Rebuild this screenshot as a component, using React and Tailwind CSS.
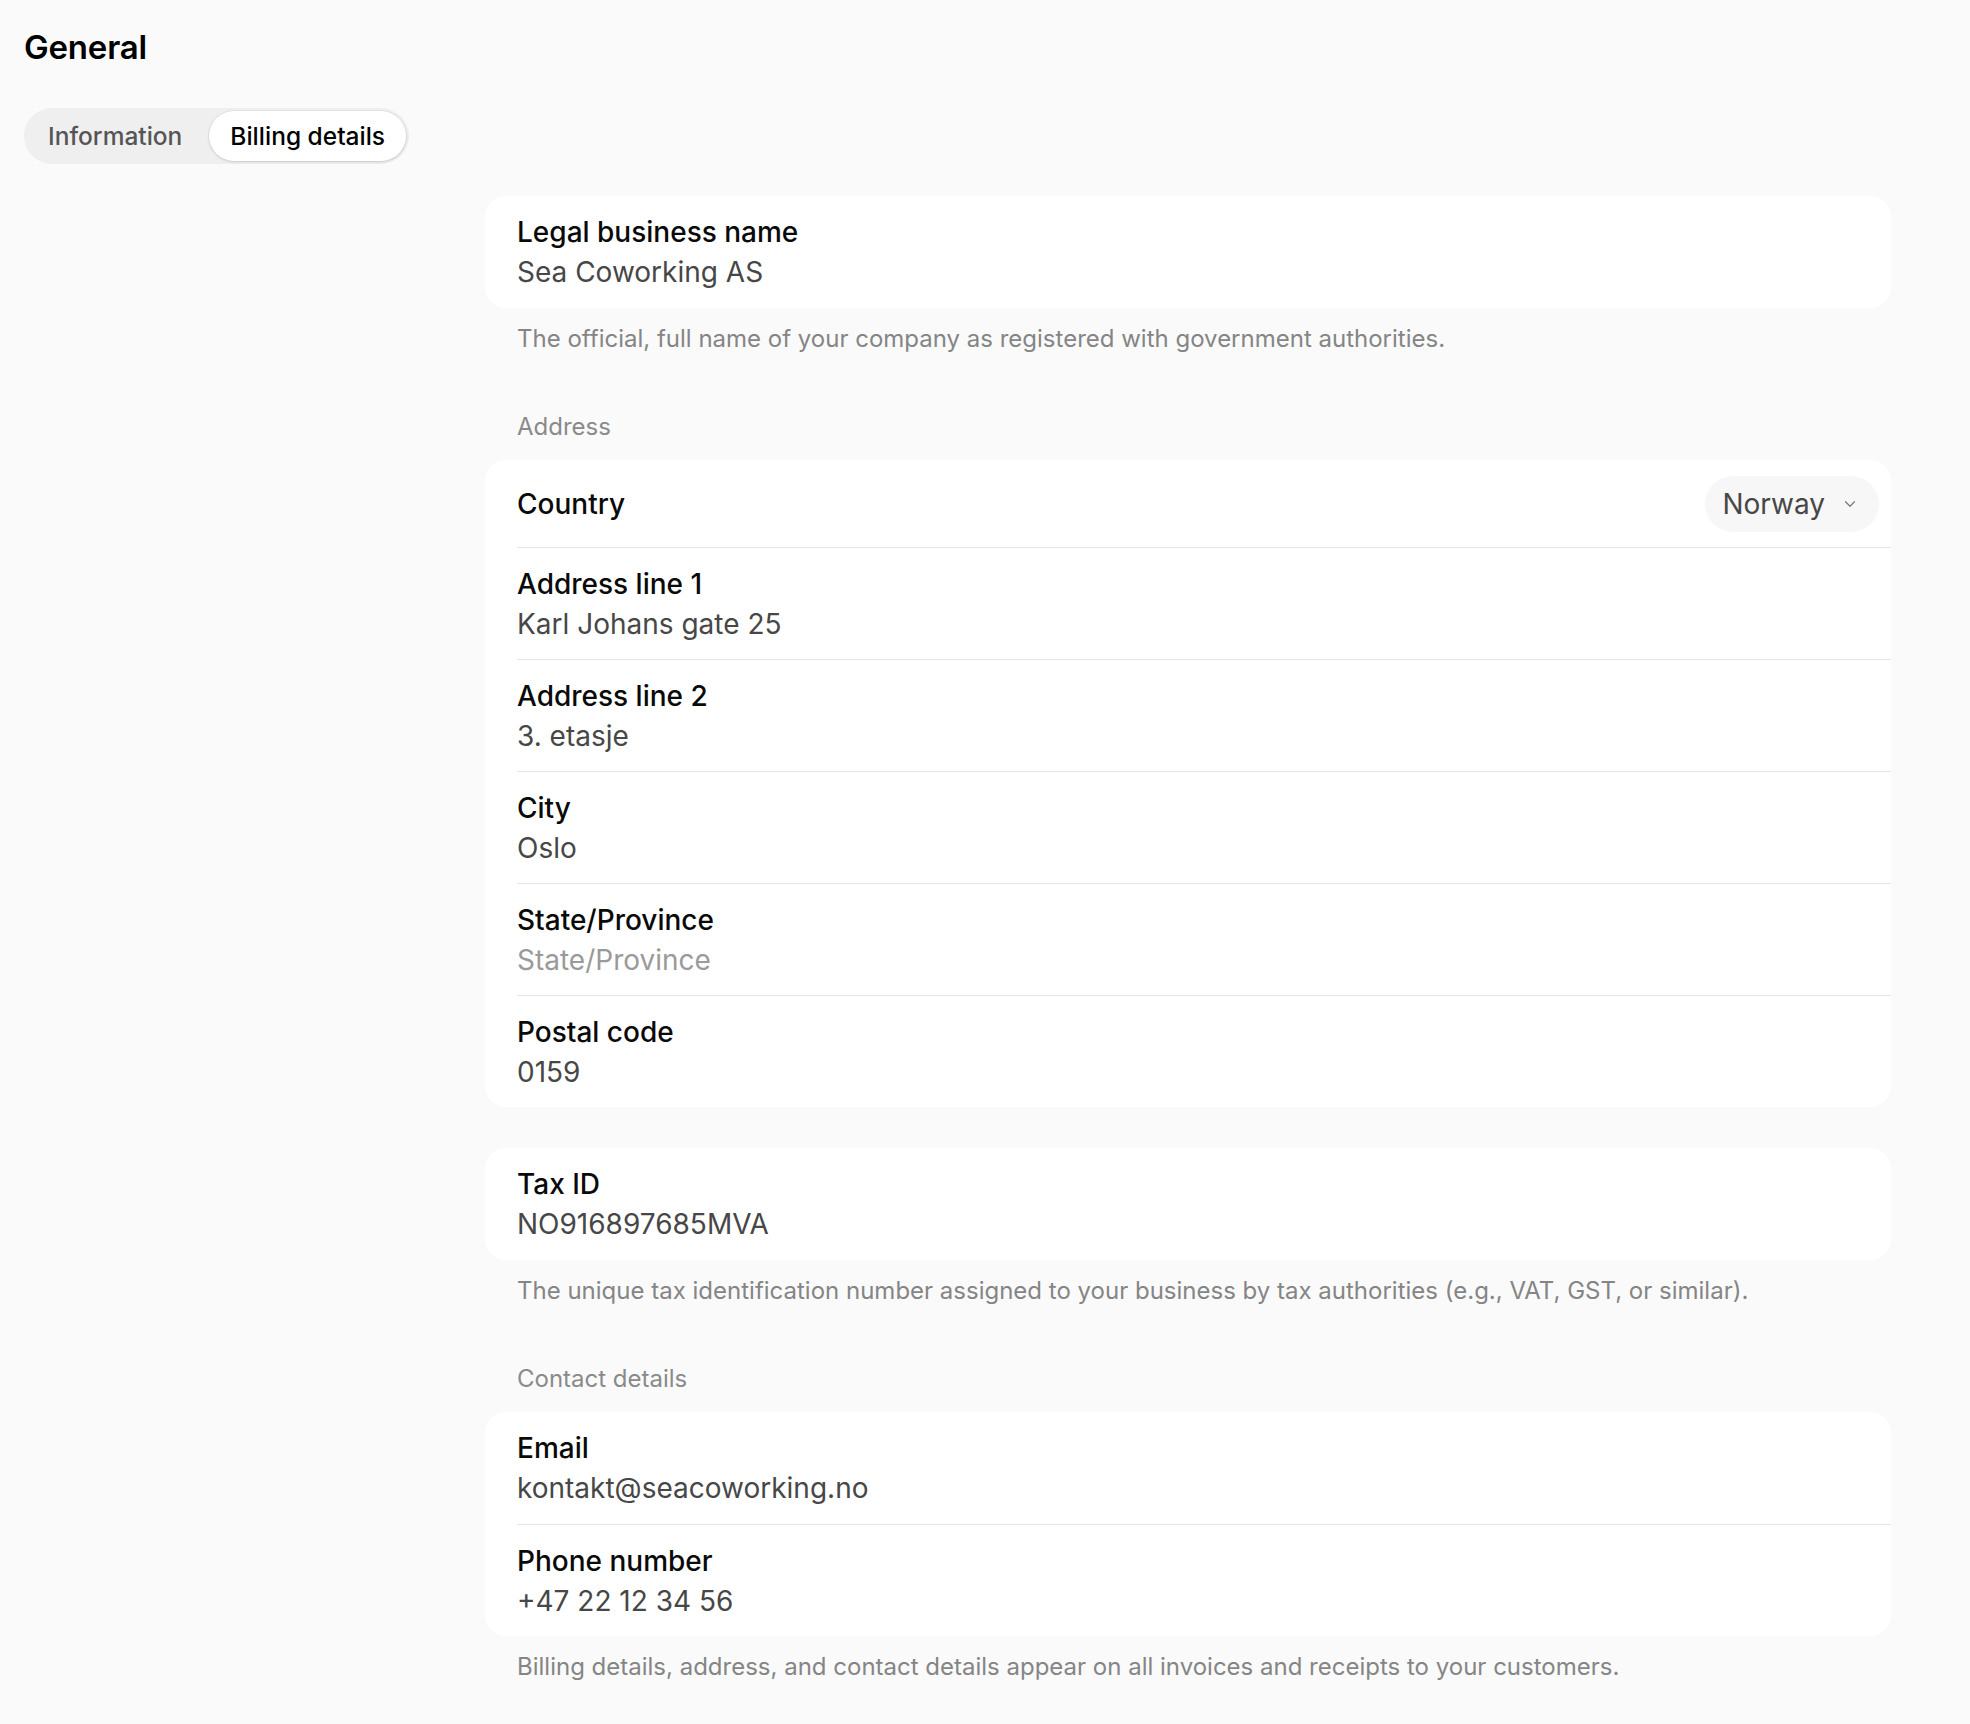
import React from "react";

const font = { fontFamily: "Inter, 'Noto Sans', Arial, sans-serif" };

function Chevron() {
  return (
    <svg width="18" height="18" viewBox="0 0 24 24" fill="none" stroke="#7a7a7a" strokeWidth="1.6" strokeLinecap="round" strokeLinejoin="round">
      <path d="m6 9 6 6 6-6" />
    </svg>
  );
}

function Field({ label, value, placeholder, border }) {
  return (
    <div className={border ? "border-t border-[#e6e6e6] ml-[32px] pt-[16px] pb-[15px] pr-[32px]" : "ml-[32px] pt-[16px] pb-[16px] pr-[32px]"}>
      <div className="text-[28px] leading-[40px] font-medium text-[#0a0a0a]">{label}</div>
      {placeholder ? (
        <div className="text-[28px] leading-[40px] text-[#9a9a9a]">{placeholder}</div>
      ) : (
        <div className="text-[28px] leading-[40px] text-[#474747]">{value}</div>
      )}
    </div>
  );
}

function Card({ children }) {
  return <div className="bg-white rounded-[21px]">{children}</div>;
}

function Desc({ children }) {
  return <p className="mt-[13px] pl-[32px] text-[24px] leading-[36px] text-[#858585]">{children}</p>;
}

function Section({ children }) {
  return <div className="mt-[52px] mb-[15px] pl-[32px] text-[24px] leading-[36px] text-[#8a8a8a]">{children}</div>;
}

export default function App() {
  return (
    <div style={font} className="min-h-[1724px] w-full bg-[#fafafa] pb-[39px]">
      <div className="pl-[24px] pt-[27px]">
        <h1 className="text-[33px] leading-[40px] font-semibold text-black tracking-[-0.2px]">General</h1>
        <div className="mt-[41px] inline-flex items-center h-[56px] rounded-full bg-[#efefef] p-[3px] gap-[6px]">
          <button className="h-[50px] px-[21px] rounded-full text-[24.5px] font-medium text-[#555555]">Information</button>
          <button className="h-[50px] px-[21px] rounded-full bg-white text-[24.5px] font-medium text-black shadow-[0_1px_3px_rgba(0,0,0,0.12),0_0_0_1px_rgba(0,0,0,0.04)]">Billing details</button>
        </div>
      </div>

      <div className="ml-[485px] w-[1406px] mt-[32px]">
        <Card>
          <Field label="Legal business name" value="Sea Coworking AS" />
        </Card>
        <Desc>The official, full name of your company as registered with government authorities.</Desc>

        <Section>Address</Section>
        <Card>
          <div className="ml-[32px] pr-[12px] h-[87px] flex items-center justify-between">
            <div className="text-[28px] font-medium text-[#0a0a0a]">Country</div>
            <div className="h-[56px] flex items-center gap-[16px] pl-[17px] pr-[20px] rounded-full bg-[#f7f7f7]">
              <span className="text-[28px] text-[#474747]">Norway</span>
              <Chevron />
            </div>
          </div>
          <Field border label="Address line 1" value="Karl Johans gate 25" />
          <Field border label="Address line 2" value="3. etasje" />
          <Field border label="City" value="Oslo" />
          <Field border label="State/Province" placeholder="State/Province" />
          <Field border label="Postal code" value="0159" />
        </Card>

        <div className="mt-[41px]">
          <Card>
            <Field label="Tax ID" value="NO916897685MVA" />
          </Card>
        </div>
        <Desc>The unique tax identification number assigned to your business by tax authorities (e.g., VAT, GST, or similar).</Desc>

        <Section>Contact details</Section>
        <Card>
          <Field label="Email" value="kontakt@seacoworking.no" />
          <Field border label="Phone number" value="+47 22 12 34 56" />
        </Card>
        <Desc>Billing details, address, and contact details appear on all invoices and receipts to your customers.</Desc>
      </div>
    </div>
  );
}
